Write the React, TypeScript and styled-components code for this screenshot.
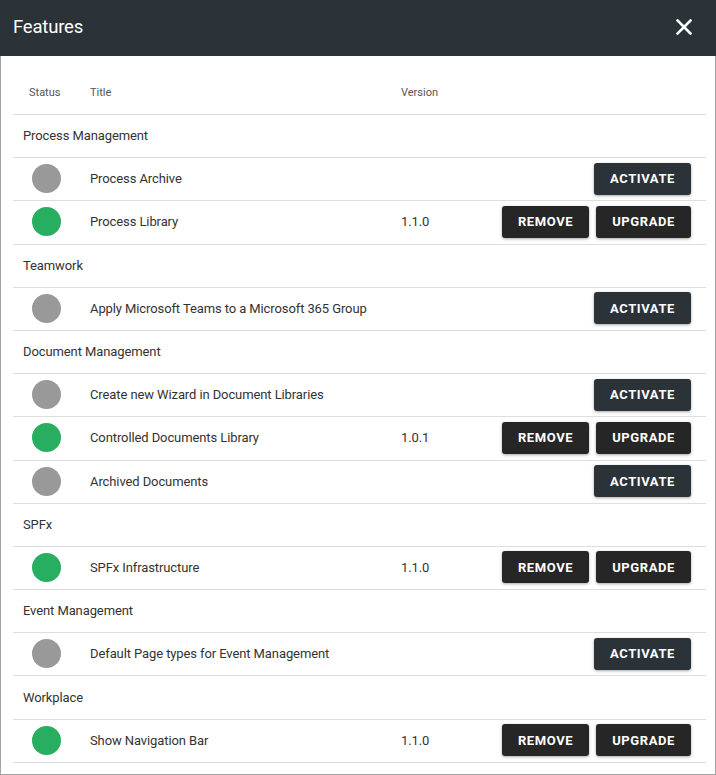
import React from 'react';
import styled, { createGlobalStyle } from 'styled-components';

const GlobalStyle = createGlobalStyle`
  html, body {
    margin: 0;
    padding: 0;
    background: #ffffff;
  }
  * {
    box-sizing: border-box;
  }
`;

const Dialog = styled.div`
  width: 716px;
  height: 775px;
  display: flex;
  flex-direction: column;
  font-family: Roboto, "Liberation Sans", Arial, sans-serif;
  background: #fff;
  overflow: hidden;
`;

const Header = styled.div`
  height: 56px;
  flex: none;
  background-color: #2b3238;
  display: flex;
  align-items: center;
  justify-content: space-between;
  padding: 0 24px 3px 13px;
`;

const HeaderTitle = styled.div`
  color: #fff;
  font-size: 18.5px;
  font-weight: 400;
  letter-spacing: -0.2px;
`;

const CloseButton = styled.button`
  background: none;
  border: none;
  padding: 0;
  width: 16px;
  height: 16px;
  display: flex;
  align-items: center;
  justify-content: center;
  cursor: pointer;
`;

const Body = styled.div`
  flex: 1;
  border: 1px solid #a3a3a3;
  border-top: none;
  padding: 14px 9px 0 12px;
`;

const Row = styled.div<{ kind?: 'head' | 'group' | 'item' }>`
  display: grid;
  grid-template-columns: 66px 311px 1fr auto;
  align-items: center;
  height: ${p => (p.kind === 'head' ? '45px' : '43.2px')};
  padding-bottom: ${p => (p.kind === 'head' ? '0' : '1px')};
  border-bottom: 1px solid #dedede;
`;

const HeadCell = styled.div<{ first?: boolean }>`
  font-size: 11px;
  color: #555;
  padding-left: ${p => (p.first ? '16px' : '11px')};
`;

const GroupCell = styled.div`
  grid-column: 1 / -1;
  padding-left: 10px;
  font-size: 13px;
  letter-spacing: -0.1px;
  color: #333;
`;

const StatusCell = styled.div`
  display: flex;
  justify-content: center;
  padding-left: 1px;
`;

const Dot = styled.div<{ active: boolean }>`
  width: 29px;
  height: 29px;
  border-radius: 50%;
  background-color: ${p => (p.active ? '#27ae60' : '#999999')};
`;

const TextCell = styled.div`
  padding-left: 11px;
  font-size: 13px;
  letter-spacing: -0.1px;
  color: #333;
  white-space: nowrap;
`;

const Actions = styled.div`
  display: flex;
  gap: 7px;
  padding-right: 15px;
`;

const ActionButton = styled.button<{ variant: 'activate' | 'dark' }>`
  height: 32px;
  min-width: 87px;
  padding: 0 16px;
  border: none;
  border-radius: 3px;
  background-color: ${p => (p.variant === 'activate' ? '#2b3238' : '#262626')};
  color: #fff;
  font-family: Roboto, "Liberation Sans", Arial, sans-serif;
  font-size: 13px;
  font-weight: 700;
  letter-spacing: 0.6px;
  text-transform: uppercase;
  box-shadow: 0 1px 3px rgba(0, 0, 0, 0.35);
  cursor: pointer;
`;

type Feature = {
  title: string;
  active: boolean;
  version?: string;
};

type Group = {
  name: string;
  features: Feature[];
};

const groups: Group[] = [
  {
    name: 'Process Management',
    features: [
      { title: 'Process Archive', active: false },
      { title: 'Process Library', active: true, version: '1.1.0' },
    ],
  },
  {
    name: 'Teamwork',
    features: [{ title: 'Apply Microsoft Teams to a Microsoft 365 Group', active: false }],
  },
  {
    name: 'Document Management',
    features: [
      { title: 'Create new Wizard in Document Libraries', active: false },
      { title: 'Controlled Documents Library', active: true, version: '1.0.1' },
      { title: 'Archived Documents', active: false },
    ],
  },
  {
    name: 'SPFx',
    features: [{ title: 'SPFx Infrastructure', active: true, version: '1.1.0' }],
  },
  {
    name: 'Event Management',
    features: [{ title: 'Default Page types for Event Management', active: false }],
  },
  {
    name: 'Workplace',
    features: [{ title: 'Show Navigation Bar', active: true, version: '1.1.0' }],
  },
];

const CloseIcon = () => (
  <svg width="16" height="16" viewBox="0 0 16 16">
    <path d="M1.5 1.5 L14.5 14.5 M14.5 1.5 L1.5 14.5" stroke="#fff" strokeWidth="2.6" strokeLinecap="square" />
  </svg>
);

const App: React.FC = () => {
  return (
    <>
      <GlobalStyle />
      <Dialog>
        <Header>
          <HeaderTitle>Features</HeaderTitle>
          <CloseButton aria-label="Close">
            <CloseIcon />
          </CloseButton>
        </Header>
        <Body>
          <Row kind="head">
            <HeadCell first>Status</HeadCell>
            <HeadCell>Title</HeadCell>
            <HeadCell>Version</HeadCell>
            <div />
          </Row>
          {groups.map(group => (
            <React.Fragment key={group.name}>
              <Row kind="group">
                <GroupCell>{group.name}</GroupCell>
              </Row>
              {group.features.map(feature => (
                <Row kind="item" key={feature.title}>
                  <StatusCell>
                    <Dot active={feature.active} />
                  </StatusCell>
                  <TextCell>{feature.title}</TextCell>
                  <TextCell>{feature.version}</TextCell>
                  <Actions>
                    {feature.active ? (
                      <>
                        <ActionButton variant="dark">Remove</ActionButton>
                        <ActionButton variant="dark">Upgrade</ActionButton>
                      </>
                    ) : (
                      <ActionButton variant="activate">Activate</ActionButton>
                    )}
                  </Actions>
                </Row>
              ))}
            </React.Fragment>
          ))}
        </Body>
      </Dialog>
    </>
  );
};

export default App;
